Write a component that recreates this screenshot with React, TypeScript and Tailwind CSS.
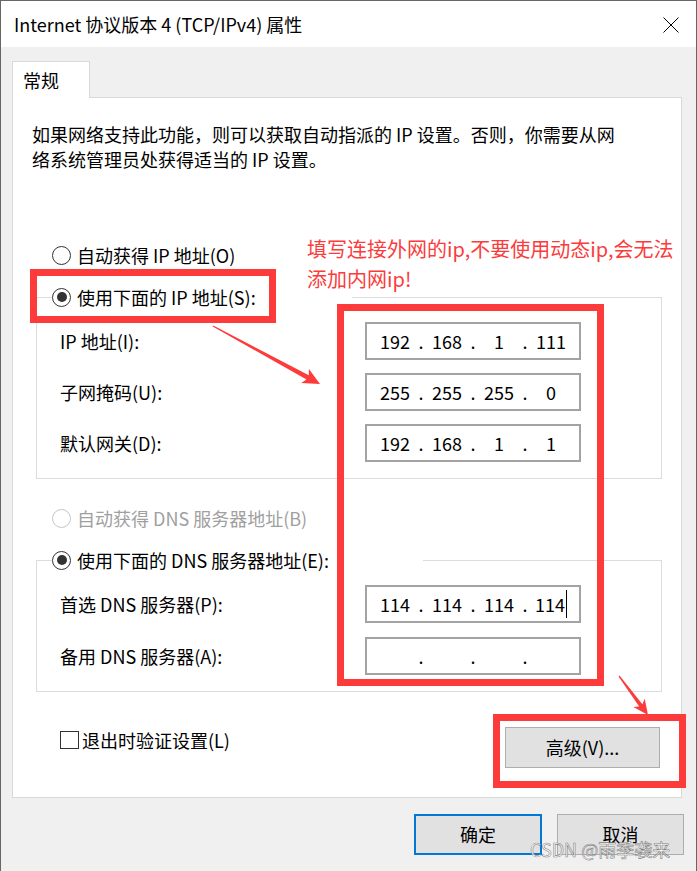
import React from "react";

type Pt = [number, number];

// tapered arrow like the screenshot tool draws: thin tail, wide notch-less head
function arrowPoints(s: Pt, t: Pt, head: number, hw: number, sw: number) {
  const dx = t[0] - s[0];
  const dy = t[1] - s[1];
  const len = Math.hypot(dx, dy);
  const ux = dx / len;
  const uy = dy / len;
  const nx = -uy;
  const ny = ux;
  const bx = t[0] - ux * head;
  const by = t[1] - uy * head;
  const cx = t[0] - ux * (head - 3);
  const cy = t[1] - uy * (head - 3);
  const pts: Pt[] = [
    [s[0] + nx * 0.6, s[1] + ny * 0.6],
    [cx + nx * sw, cy + ny * sw],
    [bx + nx * hw, by + ny * hw],
    t,
    [bx - nx * hw, by - ny * hw],
    [cx - nx * sw, cy - ny * sw],
    [s[0] - nx * 0.6, s[1] - ny * 0.6],
  ];
  return pts.map((p) => `${p[0].toFixed(1)},${p[1].toFixed(1)}`).join(" ");
}

function Radio({ checked, disabled }: { checked?: boolean; disabled?: boolean }) {
  return (
    <span
      className={`flex h-[19px] w-[19px] shrink-0 items-center justify-center rounded-full border-[1.5px] bg-white ${
        disabled ? "border-[#c6c6c6]" : "border-[#333333]"
      }`}
    >
      {checked && <span className="h-[10px] w-[10px] rounded-full bg-[#333333]" />}
    </span>
  );
}

function RadioRow({ label, checked, disabled }: { label: string; checked?: boolean; disabled?: boolean }) {
  return (
    <div className={`flex h-[24px] items-center gap-[6px] ${disabled ? "text-[#a0a0a0]" : "text-black"}`}>
      <Radio checked={checked} disabled={disabled} />
      <span className="whitespace-nowrap">{label}</span>
    </div>
  );
}

function IpBox({ parts, caret }: { parts: string[]; caret?: boolean }) {
  return (
    <div className="flex h-[38px] w-[216px] items-center border-2 border-[#a3a3a3] bg-white pl-[6px]">
      {parts.map((p, i) => (
        <React.Fragment key={i}>
          {i > 0 && <span className="w-[8px] text-center">.</span>}
          <span className="flex w-[44px] items-center justify-center">
            {p}
            {caret && i === 3 && <span className="ml-[1px] inline-block h-[28px] w-px bg-black" />}
          </span>
        </React.Fragment>
      ))}
    </div>
  );
}

function FieldRow({ label, children }: { label: string; children: React.ReactNode }) {
  return (
    <div className="flex items-center pl-[23px]">
      <span className="w-[305px] whitespace-nowrap">{label}</span>
      {children}
    </div>
  );
}

export default function App() {
  return (
    <div className="relative h-[871px] w-[697px] overflow-hidden border-x border-t border-[#666666] bg-[#f0f0f0] font-['Noto_Sans_CJK_SC','Noto_Sans',sans-serif] text-[18px] leading-[25px] text-black">
      {/* title bar */}
      <div className="flex h-[46px] items-center justify-between bg-white pl-[13px] pr-[17px]">
        <span className="whitespace-nowrap">Internet 协议版本 4 (TCP/IPv4) 属性</span>
        <svg width="16" height="16" viewBox="0 0 16 16" className="mt-[1px]">
          <path d="M0.5 0.5 L15.5 15.5 M15.5 0.5 L0.5 15.5" stroke="#000" strokeWidth="1" fill="none" />
        </svg>
      </div>

      {/* tab header */}
      <div className="ml-[11px] mt-[14px] flex">
        <div className="relative z-10 -mb-px flex h-[37px] w-[78px] items-center border-x border-t border-[#d9d9d9] bg-white pl-[10px]">
          常规
        </div>
      </div>

      {/* tab panel */}
      <div className="ml-[11px] flex h-[701px] w-[670px] flex-col border border-[#d9d9d9] bg-white pt-[24px]">
        <p className="whitespace-nowrap pl-[19px]">
          如果网络支持此功能，则可以获取自动指派的 IP 设置。否则，你需要从网
          <br />
          络系统管理员处获得适当的 IP 设置。
        </p>

        <div className="ml-[39px] mt-[71px]">
          <RadioRow label="自动获得 IP 地址(O)" />
        </div>

        <fieldset className="ml-[23px] mt-[18px] w-[626px] border border-[#dcdcdc] pb-[16px] pt-[13px]">
          <legend className="ml-[15px] w-[300px]">
            <RadioRow label="使用下面的 IP 地址(S):" checked />
          </legend>
          <div className="flex flex-col gap-[13px]">
            <FieldRow label="IP 地址(I):">
              <IpBox parts={["192", "168", "1", "111"]} />
            </FieldRow>
            <FieldRow label="子网掩码(U):">
              <IpBox parts={["255", "255", "255", "0"]} />
            </FieldRow>
            <FieldRow label="默认网关(D):">
              <IpBox parts={["192", "168", "1", "1"]} />
            </FieldRow>
          </div>
        </fieldset>

        <div className="ml-[39px] mt-[27px]">
          <RadioRow label="自动获得 DNS 服务器地址(B)" disabled />
        </div>

        <fieldset className="ml-[23px] mt-[18px] w-[626px] border border-[#dcdcdc] pb-[16px] pt-[13px]">
          <legend className="ml-[15px] w-[371px]">
            <RadioRow label="使用下面的 DNS 服务器地址(E):" checked />
          </legend>
          <div className="flex flex-col gap-[14px]">
            <FieldRow label="首选 DNS 服务器(P):">
              <IpBox parts={["114", "114", "114", "114"]} caret />
            </FieldRow>
            <FieldRow label="备用 DNS 服务器(A):">
              <IpBox parts={["", "", "", ""]} />
            </FieldRow>
          </div>
        </fieldset>

        <div className="mt-[35px] flex items-start justify-between pl-[47px] pr-[21px]">
          <label className="mt-[1px] flex h-[24px] items-center gap-[3px]">
            <span className="h-[18px] w-[19px] border-[1.5px] border-[#333333] bg-white" />
            <span className="whitespace-nowrap">退出时验证设置(L)</span>
          </label>
          <button className="h-[41px] w-[155px] border border-[#adadad] bg-[#e1e1e1]">高级(V)...</button>
        </div>
      </div>

      {/* footer */}
      <div className="mt-[16px] flex justify-end gap-[15px] pr-[12px]">
        <button className="h-[41px] w-[128px] border-2 border-[#0078d7] bg-[#e1e1e1]">确定</button>
        <button className="h-[41px] w-[127px] border border-[#adadad] bg-[#e1e1e1]">取消</button>
      </div>

      {/* red annotations */}
      <div className="pointer-events-none absolute left-[29px] top-[268px] h-[54px] w-[246px] border-[7px] border-[#fd3b3b]" />
      <div className="pointer-events-none absolute left-[336px] top-[303px] h-[382px] w-[267px] border-[7px] border-[#fd3b3b]" />
      <div className="pointer-events-none absolute left-[492px] top-[713px] h-[74px] w-[193px] border-[7px] border-[#fd3b3b]" />
      <p className="absolute left-[306px] top-[233px] whitespace-nowrap text-[20px] leading-[30px] text-[#fb3c3c]">
        填写连接外网的ip,不要使用动态ip,会无法
        <br />
        添加内网ip!
      </p>
      <svg className="pointer-events-none absolute left-[-1px] top-[-1px]" width="697" height="871">
        <polygon points={arrowPoints([213, 326], [320, 384], 17, 8, 2.4)} fill="#fd3b3b" />
        <polygon points={arrowPoints([619, 676], [648, 715], 15, 7, 2)} fill="#fd3b3b" />
      </svg>

      {/* watermark */}
      <span className="absolute left-[529px] top-[836px] whitespace-nowrap text-[18px] leading-[25px] text-[rgba(255,255,255,0.85)] [-webkit-text-stroke:0.6px_rgba(90,90,90,0.75)]">
        CSDN @雨季袭来
      </span>
    </div>
  );
}
